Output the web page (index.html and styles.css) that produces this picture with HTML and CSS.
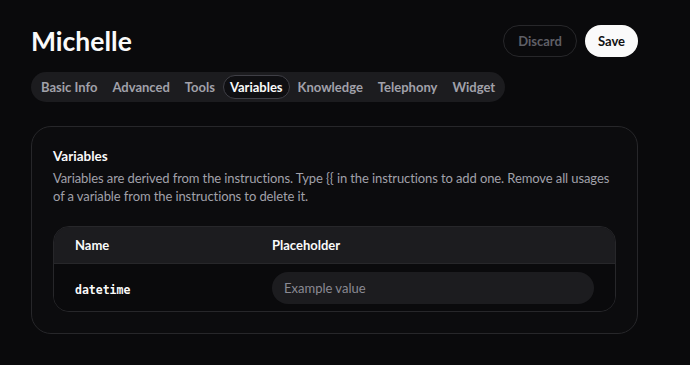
FILE: index.html
```html
<!DOCTYPE html>
<html lang="en">
<head>
  <meta charset="UTF-8">
  <meta name="viewport" content="width=device-width, initial-scale=1.0">
  <title>Michelle - Variables</title>
  <link rel="stylesheet" href="styles.css">
</head>
<body>

  <!-- Page Header -->
  <div class="page">
    <div class="top-row">
      <h1>Michelle</h1>
      <div class="actions">
        <button class="btn-discard">Discard</button>
        <button class="btn-save">Save</button>
      </div>
    </div>

    <!-- Tabs -->
    <div class="tabs">
      <a href="#">Basic Info</a>
      <a href="#">Advanced</a>
      <a href="#">Tools</a>
      <a href="#" class="active">Variables</a>
      <a href="#">Knowledge</a>
      <a href="#">Telephony</a>
      <a href="#">Widget</a>
    </div>

    <!-- Variables Card -->
    <div class="card">
      <h2>Variables</h2>
      <p class="desc">Variables are derived from the instructions. Type {{ in the instructions to add one. Remove all usages of a variable from the instructions to delete it.</p>

      <div class="var-table">
        <div class="var-head">
          <div class="col-name">Name</div>
          <div class="col-value">Placeholder</div>
        </div>
        <div class="var-row">
          <div class="col-name"><code>datetime</code></div>
          <div class="col-value"><input type="text" placeholder="Example value"></div>
        </div>
      </div>
    </div>
  </div>

</body>
</html>
```

FILE: styles.css
```css
/* General Styles */
body {
  font-family: Lato, "Noto Sans", sans-serif;
  margin: 0;
  padding: 0;
  background-color: #0a0a0c;
  color: #fafafa;
}

.page {
  padding: 24px 52px 0 31px;
}

.top-row {
  display: flex;
  justify-content: space-between;
  align-items: center;
}

h1 {
  margin: 0;
  font-size: 26.5px;
  font-weight: 700;
}

.actions {
  display: flex;
  gap: 8px;
  padding-top: 1px;
}

.actions button {
  font-family: inherit;
  font-size: 13px;
  font-weight: 700;
  height: 32px;
  border-radius: 16px;
  cursor: pointer;
}

.btn-discard {
  background-color: #0a0a0c;
  color: #5f5f66;
  border: 1px solid #27272a;
  padding: 0 14px;
}

.btn-save {
  background-color: #fafafa;
  color: #111;
  border: none;
  padding: 0 13px;
}

/* Tabs */
.tabs {
  display: inline-flex;
  align-items: center;
  gap: 1px;
  margin-top: 15px;
  padding: 3px;
  background-color: #1c1c1f;
  border-radius: 16px;
}

.tabs a {
  color: #a1a1aa;
  text-decoration: none;
  font-size: 13px;
  font-weight: 700;
  padding: 3px 6px;
  border: 1px solid transparent;
  border-radius: 13px;
}

.tabs a.active {
  color: #fafafa;
  background-color: #0f0f12;
  border-color: #3f3f46;
}

/* Card */
.card {
  margin-top: 24px;
  border: 1px solid #27272a;
  border-radius: 20px;
  background-color: #0c0c0e;
  padding: 21px 21px 21px;
}

h2 {
  margin: 0;
  font-size: 13.5px;
  font-weight: 700;
}

.desc {
  margin: 5px 0 21px;
  font-size: 13px;
  letter-spacing: -0.1px;
  line-height: 18px;
  color: #a1a1aa;
}

/* Variable table */
.var-table {
  border: 1px solid #27272a;
  border-radius: 16px;
  overflow: hidden;
}

.var-head,
.var-row {
  display: flex;
  align-items: center;
}

.var-head {
  height: 36px;
  background-color: #1c1c1f;
  border-bottom: 1px solid #27272a;
  font-size: 13px;
  font-weight: 700;
}

.var-row {
  height: 47px;
  background-color: #0a0a0c;
}

.col-name {
  width: 197px;
  padding-left: 21px;
}

.col-value {
  flex: 1;
  padding-right: 21px;
}

code {
  font-family: "DejaVu Sans Mono", monospace;
  font-size: 11.5px;
  font-weight: 700;
}

.col-value input {
  width: 100%;
  box-sizing: border-box;
  height: 32px;
  border: none;
  border-radius: 16px;
  background-color: #1c1c1f;
  color: #fafafa;
  padding: 0 12px;
  font-family: inherit;
  font-size: 13px;
}

.col-value input::placeholder {
  color: #8a8a93;
}
```
